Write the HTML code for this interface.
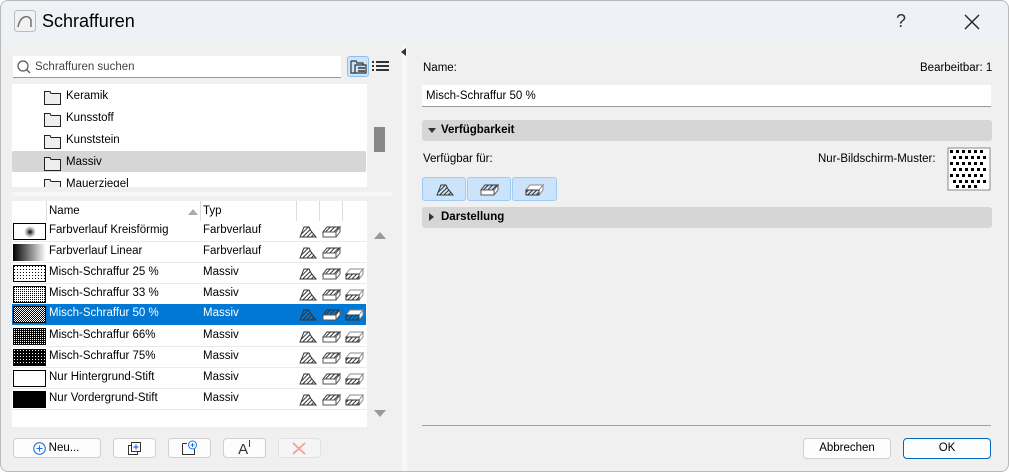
<!DOCTYPE html>
<html><head><meta charset="utf-8"><style>
*{box-sizing:border-box;margin:0;padding:0}
body{width:1009px;height:472px;overflow:hidden;background:#fff;font-family:"Liberation Sans",sans-serif;font-size:12px;color:#000;position:relative}
.win{position:absolute;left:0;top:0;width:1009px;height:472px;border-radius:8px;background:#f0f0f0;overflow:hidden}
.frame{position:absolute;left:0;top:0;width:1009px;height:472px;border:1px solid #b9b9b9;border-radius:8px;pointer-events:none}
.tb{position:absolute;left:0;top:0;width:1009px;height:44px;background:#eef2f7}
.a{position:absolute}
.t{position:absolute;white-space:nowrap;font-size:11.5px}
.btn{position:absolute;background:#fdfdfd;border:1px solid #cfcfcf;border-radius:4px;height:20px;text-align:center;line-height:18px;font-size:11.5px}
.row{position:absolute;left:12px;width:354px;height:21px;border-bottom:1px solid #eaeaea}
.sw{position:absolute;left:1px;top:2px;width:33px;height:17px;border:1px solid #000}
.nm{position:absolute;left:37px;top:3px;font-size:11.5px;white-space:nowrap}
.ty{position:absolute;left:191px;top:3px;font-size:11.5px}
.ic{position:absolute;top:3px}
.hdr{position:absolute;left:422px;width:570px;height:21px;background:#d6d6d6;border-radius:3px;font-weight:bold;font-size:11.5px;line-height:21px;padding-left:19px}
</style></head><body>
<svg width="0" height="0" style="position:absolute">
<defs>
<pattern id="h" width="3" height="3" patternUnits="userSpaceOnUse" patternTransform="rotate(45)"><rect width="1" height="3" fill="#333"/></pattern>
<pattern id="d25" width="3" height="3" patternUnits="userSpaceOnUse"><rect width="3" height="3" fill="#fff"/><rect width="1" height="1" fill="#000"/></pattern>
<pattern id="d33" width="2" height="2" patternUnits="userSpaceOnUse"><rect width="2" height="2" fill="#fff"/><rect width="1" height="1" fill="#000"/></pattern>
<pattern id="d50" width="2" height="2" patternUnits="userSpaceOnUse"><rect width="2" height="2" fill="#fff"/><rect width="1" height="1" fill="#000"/><rect x="1" y="1" width="1" height="1" fill="#000"/></pattern>
<pattern id="d66" width="2" height="2" patternUnits="userSpaceOnUse"><rect width="2" height="2" fill="#000"/><rect width="1" height="1" fill="#fff"/></pattern>
<pattern id="d75" width="3" height="3" patternUnits="userSpaceOnUse"><rect width="3" height="3" fill="#000"/><rect width="1" height="1" fill="#fff"/></pattern>
<linearGradient id="lg"><stop offset="0" stop-color="#000"/><stop offset="1" stop-color="#fff"/></linearGradient>
<radialGradient id="rg"><stop offset="0" stop-color="#000"/><stop offset=".5" stop-color="#999"/><stop offset="1" stop-color="#fff"/></radialGradient>
<g id="i1"><path d="M2,13 L6,3 L11,3 L13,7 L18,13 Z" fill="url(#h)" stroke="#333" stroke-width="1"/></g>
<g id="i2"><path d="M3,8 L7,3 L20,3 L16,8 Z" fill="url(#h)" stroke="#333"/><path d="M3,8 H16 V13 H3 Z M16,8 L20,3 V8 L16,13" fill="#fff" stroke="#555"/></g>
<g id="i3"><path d="M3,8 L7,3 L20,3 L16,8 Z M16,8 L20,3 V8 L16,13" fill="#fff" stroke="#888"/><path d="M3,8 H16 V13 H3 Z" fill="url(#h)" stroke="#333"/></g>
</defs></svg>
<div class="win">
<div class="tb"></div>
<svg class="a" style="left:14px;top:10px" width="22" height="22"><rect x=".5" y=".5" width="21" height="21" rx="3" fill="#f2f2f2" stroke="#bbb"/><path d="M4,17 C6,6 14,4 17,10 L17,17" fill="none" stroke="#777" stroke-width="1.6"/></svg>
<div class="t" style="left:42px;top:11px;font-size:18px">Schraffuren</div>
<div class="t" style="left:896px;top:11px;font-size:18px;color:#333">?</div>
<svg class="a" style="left:964px;top:14px" width="16" height="16"><path d="M1,1 L15,15 M15,1 L1,15" stroke="#222" stroke-width="1.4"/></svg>

<div class="a" style="left:13px;top:56px;width:328px;height:22px;background:#fff;border-bottom:1px solid #999"></div>
<svg class="a" style="left:16px;top:59px" width="16" height="16"><circle cx="7" cy="7" r="5" fill="none" stroke="#555" stroke-width="1.2"/><path d="M10.5,10.5 L14,14" stroke="#555" stroke-width="1.3"/></svg>
<div class="t" style="left:35px;top:61px;color:#444">Schraffuren suchen</div>
<div class="a" style="left:347px;top:56px;width:22px;height:21px;background:#cce4fb;border:1px solid #8cc0ef;border-radius:3px"></div>
<svg class="a" style="left:350px;top:60px" width="18" height="14"><path d="M1,1 H6 L7,3 H13 V5 M1,1 V13 H16 V5 H5 V13" fill="none" stroke="#333" stroke-width="1.2"/><path d="M8,8 H15 M8,11 H15" stroke="#333" stroke-width="1.5"/></svg>
<svg class="a" style="left:372px;top:60px" width="17" height="13"><path d="M0,2 H2 M4,2 H17 M0,6 H2 M4,6 H17 M0,10 H2 M4,10 H17" stroke="#333" stroke-width="2"/></svg>

<div class="a" style="left:12px;top:84px;width:355px;height:103px;background:#fff;overflow:hidden">
<div class="a" style="left:0;top:67px;width:354px;height:21px;background:#d6d6d6;border-radius:2px"></div>
<svg class="a" style="left:31px;top:5px" width="20" height="110"><g fill="#eee" stroke="#222" stroke-width="1"><path d="M1.5,2.5 H7 L8,4.5 H17.5 V15.5 H1.5 Z"/><path d="M1.5,24.5 H7 L8,26.5 H17.5 V37.5 H1.5 Z"/><path d="M1.5,46.5 H7 L8,48.5 H17.5 V59.5 H1.5 Z"/><path d="M1.5,68.5 H7 L8,70.5 H17.5 V81.5 H1.5 Z"/><path d="M1.5,90.5 H7 L8,92.5 H17.5 V103.5 H1.5 Z"/></g></svg>
<div class="t" style="left:54px;top:6px">Keramik</div>
<div class="t" style="left:54px;top:28px">Kunsstoff</div>
<div class="t" style="left:54px;top:50px">Kunststein</div>
<div class="t" style="left:54px;top:72px">Massiv</div>
<div class="t" style="left:54px;top:94px">Mauerziegel</div>
</div>
<div class="a" style="left:374px;top:127px;width:11px;height:25px;background:#888"></div>
<div class="a" style="left:12px;top:192px;width:380px;height:4px;background:#f7f7f7"></div>

<div class="a" style="left:12px;top:201px;width:355px;height:226px;background:#fff"></div>
<div class="a" style="left:12px;top:201px;width:355px;height:20px;background:#fff">
<div class="a" style="left:34px;top:0;width:1px;height:20px;background:#ddd"></div>
<div class="a" style="left:188px;top:0;width:1px;height:20px;background:#ddd"></div>
<div class="a" style="left:284px;top:0;width:1px;height:20px;background:#ddd"></div>
<div class="a" style="left:307px;top:0;width:1px;height:20px;background:#ddd"></div>
<div class="a" style="left:330px;top:0;width:1px;height:20px;background:#ddd"></div>
<div class="t" style="left:37px;top:4px">Name</div>
<svg class="a" style="left:176px;top:8px" width="10" height="6"><path d="M0,6 L5,0 L10,6Z" fill="#aaa"/></svg>
<div class="t" style="left:191px;top:4px">Typ</div>
</div>

<div class="row" style="top:221px"><svg class="sw" width="33" height="17"><rect width="33" height="17" fill="#fff"/><circle cx="16" cy="8" r="6" fill="url(#rg)"/></svg><div class="nm">Farbverlauf Kreisförmig</div><div class="ty">Farbverlauf</div><svg class="ic" style="left:286px" width="20" height="15"><use href="#i1"/></svg><svg class="ic" style="left:308px" width="22" height="15"><use href="#i2"/></svg></div>
<div class="row" style="top:242px"><svg class="sw" width="33" height="17" style="border:none"><rect width="33" height="17" fill="url(#lg)"/></svg><div class="nm">Farbverlauf Linear</div><div class="ty">Farbverlauf</div><svg class="ic" style="left:286px" width="20" height="15"><use href="#i1"/></svg><svg class="ic" style="left:308px" width="22" height="15"><use href="#i2"/></svg></div>
<div class="row" style="top:263px"><svg class="sw" width="33" height="17"><rect width="33" height="17" fill="url(#d25)"/></svg><div class="nm">Misch-Schraffur 25 %</div><div class="ty">Massiv</div><svg class="ic" style="left:286px" width="20" height="15"><use href="#i1"/></svg><svg class="ic" style="left:308px" width="22" height="15"><use href="#i2"/></svg><svg class="ic" style="left:331px" width="22" height="15"><use href="#i3"/></svg></div>
<div class="row" style="top:284px"><svg class="sw" width="33" height="17"><rect width="33" height="17" fill="url(#d33)"/></svg><div class="nm">Misch-Schraffur 33 %</div><div class="ty">Massiv</div><svg class="ic" style="left:286px" width="20" height="15"><use href="#i1"/></svg><svg class="ic" style="left:308px" width="22" height="15"><use href="#i2"/></svg><svg class="ic" style="left:331px" width="22" height="15"><use href="#i3"/></svg></div>
<div class="row" style="top:304px;height:21px;background:#0078d4;color:#fff;border:none"><svg class="sw" width="33" height="17"><rect width="33" height="17" fill="url(#d50)"/></svg><div class="nm">Misch-Schraffur 50 %</div><div class="ty">Massiv</div><svg class="ic" style="left:286px" width="20" height="15"><use href="#i1"/></svg><svg class="ic" style="left:308px" width="22" height="15"><use href="#i2"/></svg><svg class="ic" style="left:331px" width="22" height="15"><use href="#i3"/></svg></div>
<div class="row" style="top:326px"><svg class="sw" width="33" height="17"><rect width="33" height="17" fill="url(#d66)"/></svg><div class="nm">Misch-Schraffur 66%</div><div class="ty">Massiv</div><svg class="ic" style="left:286px" width="20" height="15"><use href="#i1"/></svg><svg class="ic" style="left:308px" width="22" height="15"><use href="#i2"/></svg><svg class="ic" style="left:331px" width="22" height="15"><use href="#i3"/></svg></div>
<div class="row" style="top:347px"><svg class="sw" width="33" height="17"><rect width="33" height="17" fill="url(#d75)"/></svg><div class="nm">Misch-Schraffur 75%</div><div class="ty">Massiv</div><svg class="ic" style="left:286px" width="20" height="15"><use href="#i1"/></svg><svg class="ic" style="left:308px" width="22" height="15"><use href="#i2"/></svg><svg class="ic" style="left:331px" width="22" height="15"><use href="#i3"/></svg></div>
<div class="row" style="top:368px"><div class="sw" style="background:#fff"></div><div class="nm">Nur Hintergrund-Stift</div><div class="ty">Massiv</div><svg class="ic" style="left:286px" width="20" height="15"><use href="#i1"/></svg><svg class="ic" style="left:308px" width="22" height="15"><use href="#i2"/></svg><svg class="ic" style="left:331px" width="22" height="15"><use href="#i3"/></svg></div>
<div class="row" style="top:389px"><div class="sw" style="background:#000"></div><div class="nm">Nur Vordergrund-Stift</div><div class="ty">Massiv</div><svg class="ic" style="left:286px" width="20" height="15"><use href="#i1"/></svg><svg class="ic" style="left:308px" width="22" height="15"><use href="#i2"/></svg><svg class="ic" style="left:331px" width="22" height="15"><use href="#i3"/></svg></div>

<svg class="a" style="left:374px;top:231px" width="12" height="8"><path d="M0,8 L6,1 L12,8Z" fill="#999"/></svg>
<svg class="a" style="left:374px;top:410px" width="12" height="8"><path d="M0,0 L6,7 L12,0Z" fill="#999"/></svg>

<div class="btn" style="left:13px;top:438px;width:88px;padding-left:14px">Neu...</div>
<svg class="a" style="left:33px;top:442px" width="13" height="13"><circle cx="6.5" cy="6.5" r="5.8" fill="none" stroke="#1a73e8" stroke-width="1.1"/><path d="M6.5,3.5 V9.5 M3.5,6.5 H9.5" stroke="#1a73e8" stroke-width="1.1"/></svg>
<div class="btn" style="left:113px;top:438px;width:43px"></div>
<svg class="a" style="left:127px;top:441px" width="15" height="15"><rect x="1.5" y="4.5" width="9" height="9" fill="#fff" stroke="#333"/><rect x="4.5" y="1.5" width="9" height="9" fill="#fff" stroke="#333"/><path d="M9,3.5 V8.5 M6.5,6 H11.5" stroke="#1a73e8" stroke-width="1.2"/></svg>
<div class="btn" style="left:168px;top:438px;width:43px"></div>
<svg class="a" style="left:181px;top:440px" width="17" height="16"><path d="M1.5,3.5 H6 M1.5,3.5 V14.5 H13.5 V9" fill="none" stroke="#333"/><circle cx="11.5" cy="5" r="4" fill="#fff" stroke="#1a73e8"/><path d="M11.5,3 V7 M9.5,5 H13.5" stroke="#1a73e8"/></svg>
<div class="btn" style="left:223px;top:438px;width:43px;font-size:15px;line-height:22px;color:#333">A<span style="font-size:10px;vertical-align:top;line-height:12px">I</span></div>
<div class="btn" style="left:278px;top:438px;width:43px;background:#f5f5f5;border-color:#e0e0e0"></div>
<svg class="a" style="left:292px;top:442px" width="14" height="13"><path d="M1,1 L13,12 M13,1 L1,12" stroke="#f4a090" stroke-width="1.8"/></svg>

<div class="a" style="left:402px;top:44px;width:5px;height:428px;background:#f7f7f7"></div>
<svg class="a" style="left:401px;top:48px" width="5" height="8"><path d="M5,0 L0,4 L5,8Z" fill="#333"/></svg>

<div class="t" style="left:423px;top:62px">Name:</div>
<div class="t" style="left:920px;top:62px">Bearbeitbar: 1</div>
<div class="a" style="left:422px;top:85px;width:569px;height:22px;background:#fff;border-bottom:1px solid #999"></div>
<div class="t" style="left:426px;top:90px">Misch-Schraffur 50 %</div>
<div class="hdr" style="top:120px">Verfügbarkeit</div>
<svg class="a" style="left:428px;top:128px" width="8" height="5"><path d="M0,0 H8 L4,5Z" fill="#333"/></svg>
<div class="t" style="left:423px;top:153px">Verfügbar für:</div>
<div class="t" style="left:818px;top:153px">Nur-Bildschirm-Muster:</div>
<svg class="a" style="left:947px;top:147px" width="44" height="44"><rect x="1" y="1" width="42" height="42" fill="#fff" stroke="#888"/><g fill="#000"><rect x="3" y="3" width="3" height="3"/><rect x="9" y="3" width="3" height="3"/><rect x="15" y="3" width="3" height="3"/><rect x="21" y="3" width="3" height="3"/><rect x="27" y="3" width="3" height="3"/><rect x="33" y="3" width="3" height="3"/>
<rect x="6" y="9" width="3" height="3"/><rect x="12" y="9" width="3" height="3"/><rect x="18" y="9" width="3" height="3"/><rect x="24" y="9" width="3" height="3"/><rect x="30" y="9" width="3" height="3"/><rect x="36" y="9" width="3" height="3"/>
<rect x="3" y="15" width="3" height="3"/><rect x="9" y="15" width="3" height="3"/><rect x="15" y="15" width="3" height="3"/><rect x="21" y="15" width="3" height="3"/><rect x="27" y="15" width="3" height="3"/><rect x="33" y="15" width="3" height="3"/>
<rect x="6" y="21" width="3" height="3"/><rect x="12" y="21" width="3" height="3"/><rect x="18" y="21" width="3" height="3"/><rect x="24" y="21" width="3" height="3"/><rect x="30" y="21" width="3" height="3"/><rect x="36" y="21" width="3" height="3"/>
<rect x="3" y="27" width="3" height="3"/><rect x="9" y="27" width="3" height="3"/><rect x="15" y="27" width="3" height="3"/><rect x="21" y="27" width="3" height="3"/><rect x="27" y="27" width="3" height="3"/><rect x="33" y="27" width="3" height="3"/>
<rect x="6" y="33" width="3" height="3"/><rect x="12" y="33" width="3" height="3"/><rect x="18" y="33" width="3" height="3"/><rect x="24" y="33" width="3" height="3"/><rect x="30" y="33" width="3" height="3"/><rect x="36" y="33" width="3" height="3"/>
<rect x="9" y="38" width="3" height="3"/><rect x="15" y="38" width="3" height="3"/><rect x="21" y="38" width="3" height="3"/><rect x="27" y="38" width="3" height="3"/></g></svg>
<div class="a" style="left:422px;top:177px;width:44px;height:24px;background:#cce4fb;border:1px solid #9ccbf5;border-radius:3px"></div>
<div class="a" style="left:467px;top:177px;width:44px;height:24px;background:#cce4fb;border:1px solid #9ccbf5;border-radius:3px"></div>
<div class="a" style="left:512px;top:177px;width:45px;height:24px;background:#cce4fb;border:1px solid #9ccbf5;border-radius:3px"></div>
<svg class="a" style="left:435px;top:182px" width="20" height="15"><use href="#i1"/></svg>
<svg class="a" style="left:478px;top:182px" width="22" height="15"><use href="#i2"/></svg>
<svg class="a" style="left:523px;top:182px" width="22" height="15"><use href="#i3"/></svg>
<div class="hdr" style="top:207px">Darstellung</div>
<svg class="a" style="left:429px;top:213px" width="5" height="8"><path d="M0,0 L5,4 L0,8Z" fill="#333"/></svg>
<div class="a" style="left:422px;top:425px;width:569px;height:1px;background:#a0a0a0"></div>
<div class="btn" style="left:803px;top:438px;width:88px;height:21px;line-height:19px">Abbrechen</div>
<div class="btn" style="left:903px;top:438px;width:88px;height:21px;line-height:19px;border-color:#0067c0">OK</div>
</div>
<div class="frame"></div>
</body></html>
